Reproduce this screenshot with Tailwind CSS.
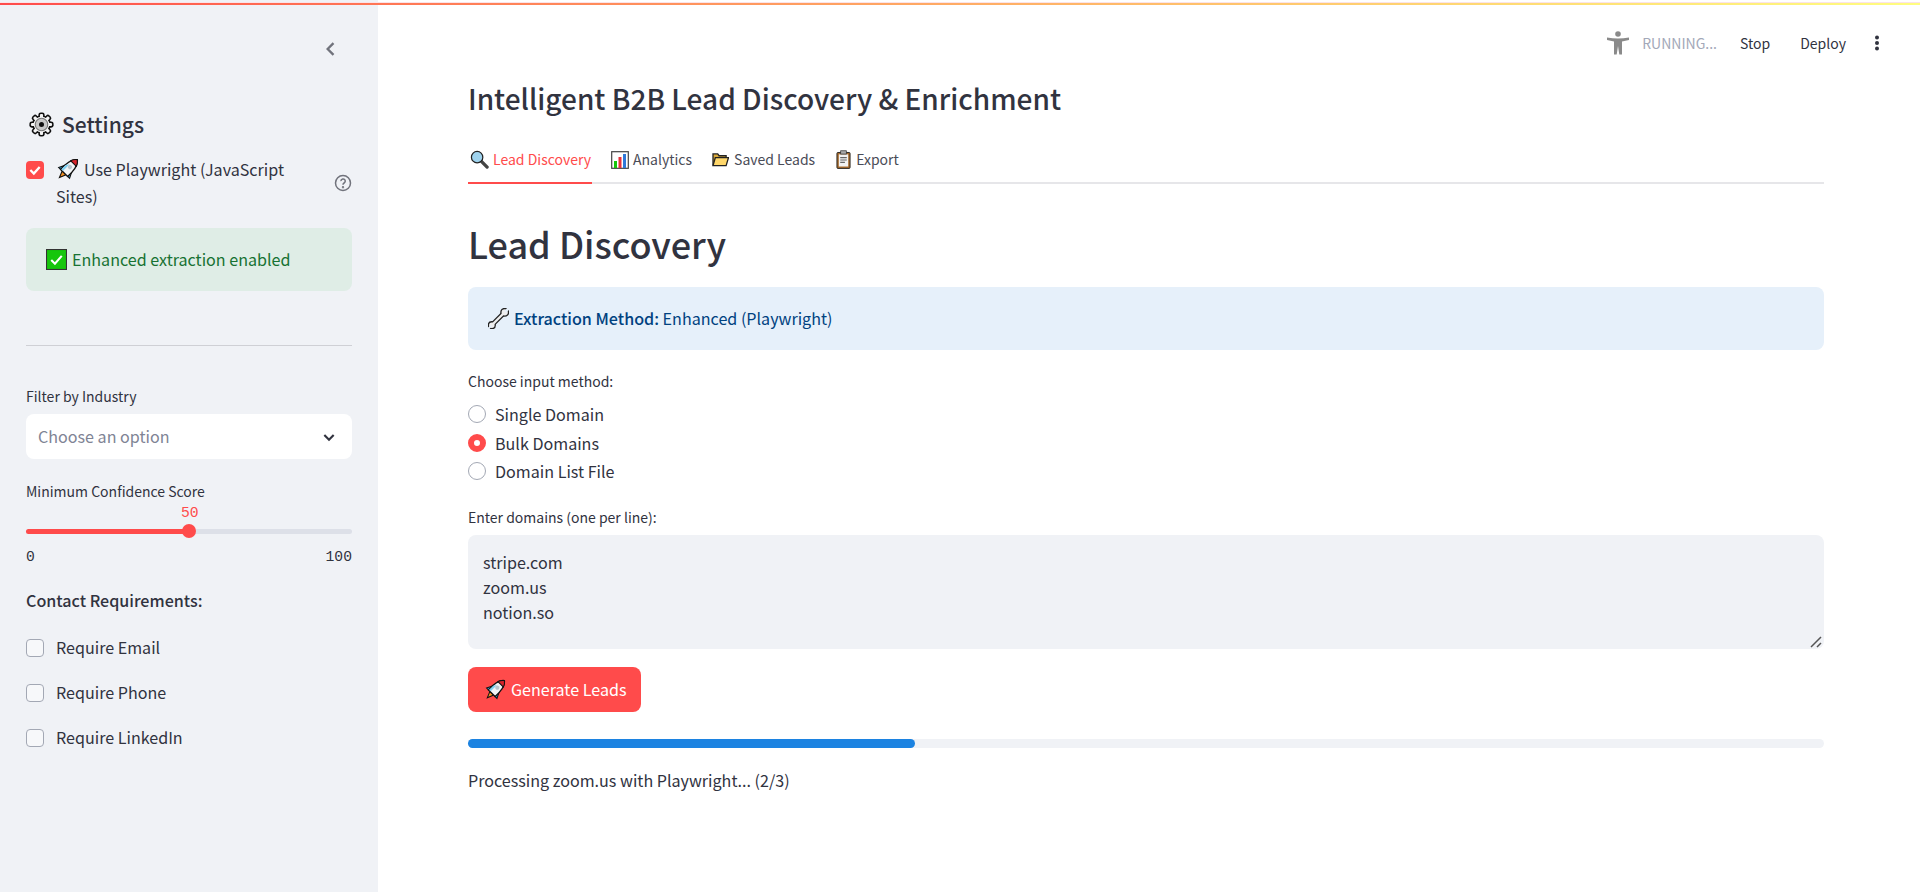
<!DOCTYPE html>
<html lang="en">
  <head>
    <meta charset="UTF-8" />
    <title>Lead Discovery</title>
    <script src="https://cdn.jsdelivr.net/npm/@tailwindcss/browser@4"></script>
  </head>
  <body class="bg-white font-['Noto_Sans_CJK_SC','Source_Sans_Pro',sans-serif] text-[#31333f] overflow-hidden">
    <!-- top decoration line -->
    <div class="absolute top-[2px] left-0 w-full h-px z-10 bg-[#fbe3e8]"></div>
    <div class="absolute top-[3px] left-0 w-full h-[2px] z-10 bg-gradient-to-r from-[#ff4b4b] to-[#fffd80]"></div>

    <div class="flex h-[892px]">
      <!-- Sidebar -->
      <aside class="w-[378px] shrink-0 bg-[#f0f2f6] px-[26px] pt-[39px]">
        <div class="flex justify-end pr-[11px] h-[20px] items-center">
          <svg class="w-[20px] h-[20px] text-[#71737c]" viewBox="0 0 24 24" fill="none" stroke="currentColor" stroke-width="2.8"><path d="M15 5l-7 7 7 7" /></svg>
        </div>
        <div class="mt-[46px] flex items-center h-[38px]">
          <svg class="ml-[3px] w-[25px] h-[25px]" viewBox="0 0 32 32">
            <g fill="#111">
              <circle cx="16" cy="16" r="12" />
              <rect x="12" y="0.5" width="8" height="31" rx="3" />
              <rect x="12" y="0.5" width="8" height="31" rx="3" transform="rotate(45 16 16)" />
              <rect x="12" y="0.5" width="8" height="31" rx="3" transform="rotate(90 16 16)" />
              <rect x="12" y="0.5" width="8" height="31" rx="3" transform="rotate(135 16 16)" />
            </g>
            <g fill="#f4f4f4">
              <circle cx="16" cy="16" r="10" />
              <rect x="14" y="2.500" width="4" height="27" rx="1.400" />
              <rect x="14" y="2.500" width="4" height="27" rx="1.400" transform="rotate(45 16 16)" />
              <rect x="14" y="2.500" width="4" height="27" rx="1.400" transform="rotate(90 16 16)" />
              <rect x="14" y="2.500" width="4" height="27" rx="1.400" transform="rotate(135 16 16)" />
            </g>
            <circle cx="16" cy="16" r="8" fill="#c8c8c8" stroke="#777" stroke-width="1.400" />
            <circle cx="16" cy="16" r="3.200" fill="#111" />
          </svg>
          <h2 class="ml-[8px] text-[21px] font-medium leading-[38px]">Settings</h2>
        </div>
        <div class="mt-[14px] flex">
          <div class="w-[18px] h-[18px] mt-[4px] rounded-[4px] bg-[#ff4b4b] flex items-center justify-center shrink-0">
            <svg class="w-[14px] h-[14px]" viewBox="0 0 24 24" fill="none" stroke="#fff" stroke-width="4"><path d="M4 12l6 6 10-11" /></svg>
          </div>
          <div class="ml-[12px] -mt-px w-[240px] text-[16.100px] leading-[27px]">
            <svg class="inline-block w-[22px] h-[22px] align-[-4px] ml-px mr-[5px]" viewBox="2 2 20 20">
              <g transform="rotate(45 12 12)">
                <path d="M5 17L8 11V17z" fill="#2ea8e6" stroke="#111" />
                <path d="M19 17L16 11V17z" fill="#2ea8e6" stroke="#111" />
                <path d="M9.500 17L12 23L14.500 17z" fill="#f5901e" stroke="#111" />
                <path d="M12 0C16 3 17 9 16.500 17H7.500C7 9 8 3 12 0z" fill="#f2f5f7" stroke="#111" stroke-width="1.200" />
                <path d="M12 0C13.800 1.300 15 3 15.700 5H8.300C9 3 10.200 1.300 12 0z" fill="#d8232a" stroke="#111" />
                <path d="M8 11C8 14 8 15 8 16.500H10V8z" fill="#7fd0f2" />
                <circle cx="12" cy="9.500" r="2" fill="#b9c6ce" />
              </g>
            </svg>Use Playwright (JavaScript Sites)
          </div>
          <div class="ml-auto mt-[17px]">
            <svg class="w-[18px] h-[18px] text-[#71737c]" viewBox="0 0 24 24" fill="none" stroke="currentColor" stroke-width="2"><circle cx="12" cy="12" r="10" /><path d="M9.200 9.500a2.900 2.900 0 1 1 4.300 2.500c-1 .6-1.500 1.200-1.500 2.300" /><circle cx="12" cy="17.500" r=".6" /></svg>
          </div>
        </div>
        <div class="mt-[18px] h-[63px] rounded-lg bg-[#dfede6] pl-[20px] flex items-center text-[16.100px] text-[#177233]">
          <svg class="w-[21px] h-[21px] mr-[5px] shrink-0" viewBox="0 0 20 20"><rect x=".5" y=".5" width="19" height="19" fill="#16c60c" stroke="#333" /><path d="M5 10.500l3.500 3.500 6.500-7.500" fill="none" stroke="#fff" stroke-width="2" /></svg>
          <span>Enhanced extraction enabled</span>
        </div>
        <hr class="mt-[54px] border-0 border-t border-[#cfd0d5]" />
        <div class="mt-[40px] text-[14px] leading-[20px]">Filter by Industry</div>
        <div class="mt-[8px] h-[45px] rounded-lg bg-white pl-[12px] pr-[15px] flex items-center justify-between">
          <span class="text-[16.100px] text-[#808495]">Choose an option</span>
          <svg class="w-[16px] h-[16px]" viewBox="0 0 24 24" fill="none" stroke="#31333f" stroke-width="3.200"><path d="M5 9l7 7 7-7" /></svg>
        </div>
        <div class="mt-[22px] text-[14px] leading-[20px]">Minimum Confidence Score</div>
        <div class="relative h-[40px]">
          <span class="absolute left-[155px] top-[4px] font-['Liberation_Mono',monospace] text-[14.700px] leading-[16px] text-[#ff4b4b]">50</span>
          <div class="absolute left-0 right-0 top-[28px] h-[5px] rounded-full bg-[#dde0e8]">
            <div class="h-full w-1/2 rounded-full bg-[#ff4b4b]"></div>
          </div>
          <div class="absolute left-[156px] top-[23px] w-[14px] h-[14px] rounded-full bg-[#ff4b4b]"></div>
        </div>
        <div class="mt-[8px] flex justify-between font-['Liberation_Mono',monospace] text-[14.700px] leading-[16px]">
          <span>0</span><span>100</span>
        </div>
        <div class="mt-[23px] text-[16.100px] font-medium leading-[24px]">Contact Requirements:</div>
        <div class="mt-[24px] flex flex-col gap-[21px] text-[16.100px]">
          <label class="flex items-center h-[24px]"><span class="w-[18px] h-[18px] rounded-[4px] border border-[#a3a8b4] bg-[#f7f8fa]"></span><span class="ml-[12px] pb-[2px]">Require Email</span></label>
          <label class="flex items-center h-[24px]"><span class="w-[18px] h-[18px] rounded-[4px] border border-[#a3a8b4] bg-[#f7f8fa]"></span><span class="ml-[12px] pb-[2px]">Require Phone</span></label>
          <label class="flex items-center h-[24px]"><span class="w-[18px] h-[18px] rounded-[4px] border border-[#a3a8b4] bg-[#f7f8fa]"></span><span class="ml-[12px] pb-[2px]">Require LinkedIn</span></label>
        </div>
      </aside>

      <!-- Main -->
      <main class="relative flex-1">
        <!-- toolbar -->
        <div class="absolute top-[30px] right-[35px] flex items-center h-[26px] text-[14px]">
          <svg class="w-[22px] h-[24px] text-[#8a8a8a]" viewBox="0 0 22 24" fill="currentColor"><circle cx="11" cy="3" r="2.800" /><path d="M0 6.500Q11 8.500 22 6.500V9L15 10.500V23.500H12.300L11 15L9.700 23.500H7V10.500L0 9z" /></svg>
          <span class="ml-[13px] text-[#a3a8b8]">RUNNING...</span>
          <span class="ml-[23px]">Stop</span>
          <span class="ml-[30px]">Deploy</span>
          <svg class="ml-[23px] w-[16px] h-[16px]" viewBox="0 0 16 16" fill="#31333f"><circle cx="8" cy="2.500" r="2" /><circle cx="8" cy="8" r="2" /><circle cx="8" cy="13.500" r="2" /></svg>
        </div>

        <div class="ml-[90px] w-[1356px] pt-[76px]">
          <h2 class="text-[28px] font-medium leading-[44px]">Intelligent B2B Lead Discovery &amp; Enrichment</h2>

          <!-- tabs -->
          <div class="mt-[17px] flex h-[47px] border-b-2 border-[#e6e6e9] text-[14px]">
            <div class="-mb-[2px] w-[124px] h-[47px] border-b-2 border-[#ff4b4b] flex items-center text-[#ff4b4b]">
              <svg class="ml-[2px] w-[19px] h-[19px] mr-[4px]" viewBox="0 0 20 20"><path d="M11.500 11.500l6.500 6.500" stroke="#444" stroke-width="3.500" stroke-linecap="round" /><circle cx="7.500" cy="7.500" r="6" fill="#9fd3ee" stroke="#222" stroke-width="1.300" /></svg>
              <span>Lead Discovery</span>
            </div>
            <div class="ml-[19px] flex items-center text-[#4a4c57]">
              <svg class="w-[18px] h-[18px] mr-[4px]" viewBox="0 0 18 18"><rect x=".7" y=".7" width="16.600" height="16.600" fill="#fff" stroke="#444" stroke-width="1.200" /><rect x="3" y="10" width="3" height="7" fill="#16c60c" /><rect x="7.500" y="6" width="3" height="11" fill="#e8303a" /><rect x="12" y="3" width="3" height="14" fill="#2f78d8" /></svg>
              <span>Analytics</span>
            </div>
            <div class="ml-[20px] flex items-center text-[#4a4c57]">
              <svg class="w-[17px] h-[15px] mr-[5px]" viewBox="0 0 18 16"><path d="M1 14.500V2h5l1.500 2H15v2" fill="#d9a93a" stroke="#222" stroke-width="1.400" /><path d="M1 14.500L3.500 6H17.500L15 14.500z" fill="#ffd76a" stroke="#222" stroke-width="1.400" /></svg>
              <span>Saved Leads</span>
            </div>
            <div class="ml-[21px] flex items-center text-[#4a4c57]">
              <svg class="w-[15px] h-[19px] mr-[5px]" viewBox="0 0 16 20"><rect x="1" y="2.500" width="14" height="17" rx="1" fill="#a66a2c" stroke="#222" /><rect x="3" y="4.500" width="10" height="13" fill="#f2f2f2" /><rect x="5" y=".7" width="6" height="3.500" fill="#aaa" stroke="#333" stroke-width=".8" /><path d="M4.500 8h7M4.500 10.500h7M4.500 13h5" stroke="#666" stroke-width="1.200" /></svg>
              <span>Export</span>
            </div>
          </div>

          <h1 class="mt-[29px] text-[36px] font-medium leading-[60px]">Lead Discovery</h1>

          <div class="mt-[14px] h-[63px] rounded-lg bg-[#e6f0fa] pl-[20px] flex items-center text-[16.100px] text-[#004280]">
            <svg class="w-[21px] h-[21px] mr-[5px] shrink-0" viewBox="0 0 22 22">
              <path d="M4 18L17 5" stroke="#222" stroke-width="5" stroke-linecap="round" />
              <circle cx="17.500" cy="4.500" r="4" fill="#eee" stroke="#222" stroke-width="1.400" />
              <circle cx="4" cy="18" r="3.600" fill="#eee" stroke="#222" stroke-width="1.400" />
              <path d="M4 18L17 5" stroke="#eee" stroke-width="2.400" />
              <path d="M18 4L21.500 .5" stroke="#e6f0fa" stroke-width="2.500" />
              <path d="M3.500 18.500L.5 21.500" stroke="#e6f0fa" stroke-width="2" />
            </svg>
            <span><span class="font-medium">Extraction Method:</span> Enhanced (Playwright)</span>
          </div>

          <div class="mt-[21px] text-[14px] leading-[20px]">Choose input method:</div>
          <div class="mt-[9px] flex flex-col text-[16.100px]">
            <div class="flex items-center h-[28.500px]"><span class="w-[18px] h-[18px] rounded-full border border-[#a3a8b4]"></span><span class="ml-[9px]">Single Domain</span></div>
            <div class="flex items-center h-[28.500px]"><span class="w-[18px] h-[18px] rounded-full border-[6px] border-[#ff4b4b] bg-white"></span><span class="ml-[9px]">Bulk Domains</span></div>
            <div class="flex items-center h-[28.500px]"><span class="w-[18px] h-[18px] rounded-full border border-[#a3a8b4]"></span><span class="ml-[9px]">Domain List File</span></div>
          </div>

          <div class="mt-[21px] text-[14px] leading-[20px]">Enter domains (one per line):</div>
          <div class="relative mt-[8px] h-[114px] rounded-lg bg-[#f0f2f6] px-[15px] pt-[15px] text-[16.100px] leading-[25px]">
            <div>stripe.com</div>
            <div>zoom.us</div>
            <div>notion.so</div>
            <svg class="absolute right-[2px] bottom-px w-[12px] h-[12px]" viewBox="0 0 12 12" stroke="#555" stroke-width="1.500"><path d="M1 11L11 1M7 11l4-4" /></svg>
          </div>

          <button class="mt-[18px] h-[45px] w-[173px] rounded-lg bg-[#ff4b4b] flex items-center pl-[17px] text-[16.100px] text-white">
            <svg class="w-[21px] h-[21px] mr-[5px]" viewBox="2 2 20 20">
              <g transform="rotate(45 12 12)">
                <path d="M5 17L8 11V17z" fill="#2ea8e6" stroke="#111" />
                <path d="M19 17L16 11V17z" fill="#2ea8e6" stroke="#111" />
                <path d="M9.500 17L12 23L14.500 17z" fill="#f5901e" stroke="#111" />
                <path d="M12 0C16 3 17 9 16.500 17H7.500C7 9 8 3 12 0z" fill="#f2f5f7" stroke="#111" stroke-width="1.200" />
                <path d="M12 0C13.800 1.300 15 3 15.700 5H8.300C9 3 10.200 1.300 12 0z" fill="#d8232a" stroke="#111" />
                <path d="M8 11C8 14 8 15 8 16.500H10V8z" fill="#7fd0f2" />
                <circle cx="12" cy="9.500" r="2" fill="#b9c6ce" />
              </g>
            </svg>
            <span>Generate Leads</span>
          </button>

          <div class="mt-[27px] h-[9px] rounded-full bg-[#f0f2f6]">
            <div class="h-full w-[447px] rounded-full bg-[#1c83e1]"></div>
          </div>
          <div class="mt-[20px] text-[16.100px] leading-[24px]">Processing zoom.us with Playwright... (2/3)</div>
        </div>
      </main>
    </div>
  </body>
</html>
